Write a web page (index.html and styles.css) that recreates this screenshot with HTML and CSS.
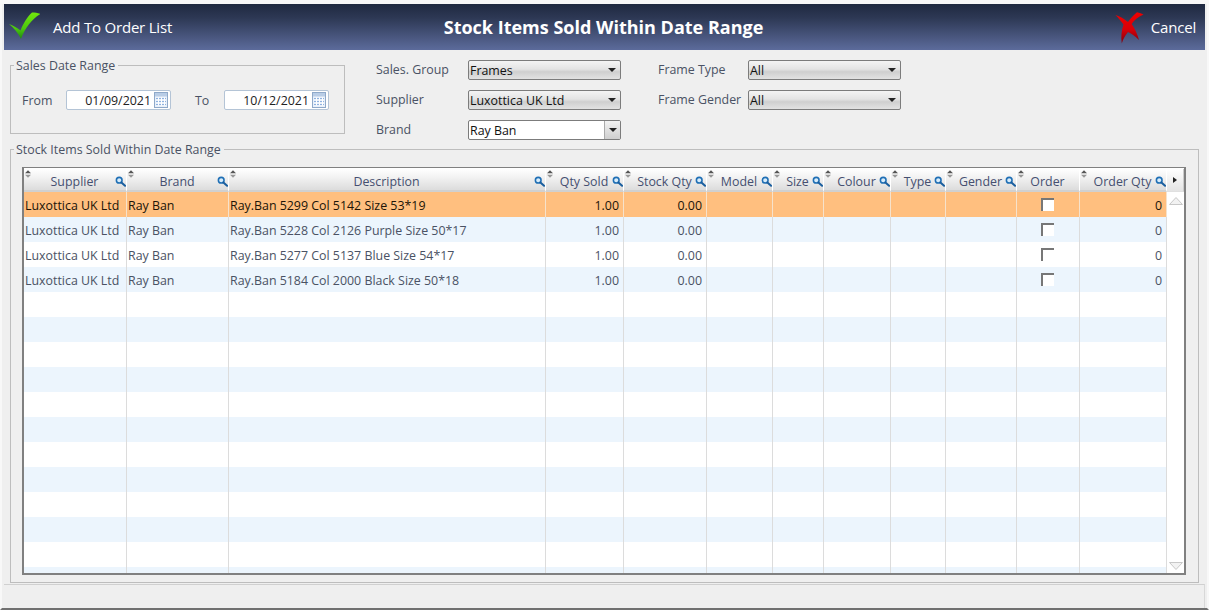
FILE: index.html
```html
<!DOCTYPE html>
<html lang="en">
<head>
<meta charset="utf-8">
<title>Stock Items Sold Within Date Range</title>
<link rel="stylesheet" href="styles.css">
</head>
<body>
<svg class="defs" width="0" height="0" aria-hidden="true">
  <defs>
    <symbol id="search" viewBox="0 0 12 12">
      <circle cx="4.6" cy="4.6" r="3.1" fill="#d8ecfa" stroke="#1f6fb5" stroke-width="1.7"/>
      <path d="M7 7l4 3.6" stroke="#1a5f9f" stroke-width="2.2" stroke-linecap="round"/>
    </symbol>
    <symbol id="sort" viewBox="0 0 7 9">
      <path d="M3.5 0L7 3.5H0z" fill="#555"/>
      <path d="M0 5.5h7L3.5 9z" fill="#999"/>
    </symbol>
    <symbol id="cal" viewBox="0 0 14 16">
      <rect x=".5" y=".5" width="13" height="15" fill="#eaf1fa" stroke="#8fa9c9"/>
      <rect x="1" y="1" width="12" height="3.5" fill="#b9cde6"/>
      <path d="M2 6h10v1H2zM2 9h10v1H2zM2 12h10v1H2z" fill="#8fb2e0"/>
      <path d="M4 5.5h1v8H4zM7 5.5h1v8H7zM10 5.5h1v8h-1z" fill="#fff"/>
    </symbol>
  </defs>
</svg>
<div class="window">
  <header class="titlebar">
    <div class="tb-side">
      <button class="tb-btn">
        <svg class="tb-check" width="36" height="32" viewBox="0 0 36 32"><defs><linearGradient id="g" x1="0" y1="0" x2="0" y2="1"><stop offset="0" stop-color="#72e60c"/><stop offset=".6" stop-color="#4cc80e"/><stop offset="1" stop-color="#1f8a10"/></linearGradient></defs><path d="M5 13C9 14.500 13 16.500 16.500 19.500C19 13 23 6 28 1.500C31 1.500 34 2 36.500 3C28 8 21 17 17 28C14 22 10 17 5 13Z" fill="url(#g)"/></svg>
        <span>Add To Order List</span>
      </button>
    </div>
    <h1 class="tb-title">Stock Items Sold Within Date Range</h1>
    <div class="tb-side tb-right">
      <button class="tb-btn tb-cancel">
        <svg width="30" height="34" viewBox="0 0 30 34"><defs><linearGradient id="r" x1="0" y1="0" x2="0" y2="1"><stop offset="0" stop-color="#f00000"/><stop offset=".55" stop-color="#d80008"/><stop offset="1" stop-color="#7a0010"/></linearGradient></defs><path d="M.5 4C5 5.500 9 7.500 13 11C16 7 19 3.500 22 1.300C24.500 2 27 2.800 28.500 3.500C23 6 19 9 16.700 13C20 18 22.500 23 24 29C20 25 16 22.500 13 21C10.500 24 8 28 6.800 32.500C5.700 26 6.500 19 8.500 13.500C6 10 3 6.500 .5 4Z" fill="url(#r)"/></svg>
        <span>Cancel</span>
      </button>
    </div>
  </header>

  <section class="filters">
    <fieldset class="group date-group">
      <legend>Sales Date Range</legend>
      <div class="date-row">
        <label class="date-label from">From</label>
        <div class="date-input"><span>01/09/2021</span><svg width="14" height="16"><use href="#cal"/></svg></div>
        <label class="date-label to">To</label>
        <div class="date-input"><span>10/12/2021</span><svg width="14" height="16"><use href="#cal"/></svg></div>
      </div>
    </fieldset>
    <div class="fields">
      <span class="f-label">Sales. Group</span><div class="combo"><span>Frames</span><i class="arrow"></i></div>
      <span class="f-label second">Frame Type</span><div class="combo"><span>All</span><i class="arrow"></i></div>
      <span class="f-label">Supplier</span><div class="combo"><span>Luxottica UK Ltd</span><i class="arrow"></i></div>
      <span class="f-label second">Frame Gender</span><div class="combo"><span>All</span><i class="arrow"></i></div>
      <span class="f-label">Brand</span><div class="combo edit"><span>Ray Ban</span><b class="drop"><i class="arrow"></i></b></div>
    </div>
  </section>

  <fieldset class="group stock-group">
    <legend>Stock Items Sold Within Date Range</legend>
    <div class="grid">
      <div class="grid-head">
        <div class="row cols head">
          <div class="hc"><svg class="sort"><use href="#sort"/></svg>Supplier<svg class="find"><use href="#search"/></svg></div>
          <div class="hc"><svg class="sort"><use href="#sort"/></svg>Brand<svg class="find"><use href="#search"/></svg></div>
          <div class="hc"><svg class="sort"><use href="#sort"/></svg>Description<svg class="find"><use href="#search"/></svg></div>
          <div class="hc"><svg class="sort"><use href="#sort"/></svg>Qty Sold<svg class="find"><use href="#search"/></svg></div>
          <div class="hc"><svg class="sort"><use href="#sort"/></svg>Stock Qty<svg class="find"><use href="#search"/></svg></div>
          <div class="hc"><svg class="sort"><use href="#sort"/></svg>Model<svg class="find"><use href="#search"/></svg></div>
          <div class="hc"><svg class="sort"><use href="#sort"/></svg>Size<svg class="find"><use href="#search"/></svg></div>
          <div class="hc"><svg class="sort"><use href="#sort"/></svg>Colour<svg class="find"><use href="#search"/></svg></div>
          <div class="hc"><svg class="sort"><use href="#sort"/></svg>Type<svg class="find"><use href="#search"/></svg></div>
          <div class="hc"><svg class="sort"><use href="#sort"/></svg>Gender<svg class="find"><use href="#search"/></svg></div>
          <div class="hc"><svg class="sort"><use href="#sort"/></svg>Order</div>
          <div class="hc"><svg class="sort"><use href="#sort"/></svg>Order Qty<svg class="find"><use href="#search"/></svg></div>
          <div class="hscroll"><i class="right-arrow"></i></div>
        </div>
      </div>
      <div class="grid-main">
        <div class="rows">
          <div class="row cols sel"><div class="c">Luxottica UK Ltd</div><div class="c">Ray Ban</div><div class="c">Ray.Ban 5299 Col 5142 Size 53*19</div><div class="c n">1.00</div><div class="c n">0.00</div><div class="c"></div><div class="c"></div><div class="c"></div><div class="c"></div><div class="c"></div><div class="c ck"><i class="checkbox"></i></div><div class="c n">0</div></div>
          <div class="row cols alt"><div class="c">Luxottica UK Ltd</div><div class="c">Ray Ban</div><div class="c">Ray.Ban 5228 Col 2126 Purple Size 50*17</div><div class="c n">1.00</div><div class="c n">0.00</div><div class="c"></div><div class="c"></div><div class="c"></div><div class="c"></div><div class="c"></div><div class="c ck"><i class="checkbox"></i></div><div class="c n">0</div></div>
          <div class="row cols"><div class="c">Luxottica UK Ltd</div><div class="c">Ray Ban</div><div class="c">Ray.Ban 5277 Col 5137 Blue Size 54*17</div><div class="c n">1.00</div><div class="c n">0.00</div><div class="c"></div><div class="c"></div><div class="c"></div><div class="c"></div><div class="c"></div><div class="c ck"><i class="checkbox"></i></div><div class="c n">0</div></div>
          <div class="row cols alt"><div class="c">Luxottica UK Ltd</div><div class="c">Ray Ban</div><div class="c">Ray.Ban 5184 Col 2000 Black Size 50*18</div><div class="c n">1.00</div><div class="c n">0.00</div><div class="c"></div><div class="c"></div><div class="c"></div><div class="c"></div><div class="c"></div><div class="c ck"><i class="checkbox"></i></div><div class="c n">0</div></div>
          <div class="row cols"><div class="c"></div><div class="c"></div><div class="c"></div><div class="c"></div><div class="c"></div><div class="c"></div><div class="c"></div><div class="c"></div><div class="c"></div><div class="c"></div><div class="c"></div><div class="c"></div></div>
          <div class="row cols alt"><div class="c"></div><div class="c"></div><div class="c"></div><div class="c"></div><div class="c"></div><div class="c"></div><div class="c"></div><div class="c"></div><div class="c"></div><div class="c"></div><div class="c"></div><div class="c"></div></div>
          <div class="row cols"><div class="c"></div><div class="c"></div><div class="c"></div><div class="c"></div><div class="c"></div><div class="c"></div><div class="c"></div><div class="c"></div><div class="c"></div><div class="c"></div><div class="c"></div><div class="c"></div></div>
          <div class="row cols alt"><div class="c"></div><div class="c"></div><div class="c"></div><div class="c"></div><div class="c"></div><div class="c"></div><div class="c"></div><div class="c"></div><div class="c"></div><div class="c"></div><div class="c"></div><div class="c"></div></div>
          <div class="row cols"><div class="c"></div><div class="c"></div><div class="c"></div><div class="c"></div><div class="c"></div><div class="c"></div><div class="c"></div><div class="c"></div><div class="c"></div><div class="c"></div><div class="c"></div><div class="c"></div></div>
          <div class="row cols alt"><div class="c"></div><div class="c"></div><div class="c"></div><div class="c"></div><div class="c"></div><div class="c"></div><div class="c"></div><div class="c"></div><div class="c"></div><div class="c"></div><div class="c"></div><div class="c"></div></div>
          <div class="row cols"><div class="c"></div><div class="c"></div><div class="c"></div><div class="c"></div><div class="c"></div><div class="c"></div><div class="c"></div><div class="c"></div><div class="c"></div><div class="c"></div><div class="c"></div><div class="c"></div></div>
          <div class="row cols alt"><div class="c"></div><div class="c"></div><div class="c"></div><div class="c"></div><div class="c"></div><div class="c"></div><div class="c"></div><div class="c"></div><div class="c"></div><div class="c"></div><div class="c"></div><div class="c"></div></div>
          <div class="row cols"><div class="c"></div><div class="c"></div><div class="c"></div><div class="c"></div><div class="c"></div><div class="c"></div><div class="c"></div><div class="c"></div><div class="c"></div><div class="c"></div><div class="c"></div><div class="c"></div></div>
          <div class="row cols alt"><div class="c"></div><div class="c"></div><div class="c"></div><div class="c"></div><div class="c"></div><div class="c"></div><div class="c"></div><div class="c"></div><div class="c"></div><div class="c"></div><div class="c"></div><div class="c"></div></div>
          <div class="row cols"><div class="c"></div><div class="c"></div><div class="c"></div><div class="c"></div><div class="c"></div><div class="c"></div><div class="c"></div><div class="c"></div><div class="c"></div><div class="c"></div><div class="c"></div><div class="c"></div></div>
          <div class="row cols alt"><div class="c"></div><div class="c"></div><div class="c"></div><div class="c"></div><div class="c"></div><div class="c"></div><div class="c"></div><div class="c"></div><div class="c"></div><div class="c"></div><div class="c"></div><div class="c"></div></div>
        </div>
        <div class="vscroll">
          <svg width="14" height="8" viewBox="0 0 14 8"><path d="M.5 7.500L7 .5L13.500 7.500Z" fill="#f2f2f2" stroke="#c8c8c8"/></svg>
          <svg width="14" height="8" viewBox="0 0 14 8"><path d="M.5 .5L7 7.500L13.500 .5Z" fill="#f2f2f2" stroke="#c8c8c8"/></svg>
        </div>
      </div>
    </div>
  </fieldset>

  <footer class="statusbar"></footer>
</div>
</body>
</html>
```
FILE: styles.css
```css
* { box-sizing: border-box; }
html, body { margin: 0; height: 100%; overflow: hidden; }
body { font-family: "Open Sans", "Noto Sans", sans-serif; font-size: 12.4px; color: #4a5264; background: #efefef; }
.defs { position: absolute; }

.window {
  width: 1209px; height: 610px;
  display: flex; flex-direction: column;
  background: #efefef;
  border: solid #f8f8f8;
  border-width: 4px 2px 2px 2px;
  border-bottom-color: #707070;
}

.titlebar {
  flex: none; height: 46px; margin: 0 2px;
  display: flex; align-items: center;
  background: linear-gradient(#1f2940 0%, #2d3854 30%, #5c6b9b 100%);
  color: #fff;
}
.tb-side { flex: 1 1 0; display: flex; }
.tb-right { justify-content: flex-end; }
.tb-btn {
  display: flex; align-items: center;
  background: none; border: 0; padding: 0;
  font: inherit; font-size: 15px; color: #fff;
}
.tb-btn span { letter-spacing: -.2px; }
.tb-check { margin: 0 13px 0 0; }
.tb-cancel { gap: 6px; padding-right: 9px; }
.tb-cancel svg { margin-top: 2px; }
.tb-title { margin: 0 2px 0 0; font-size: 18px; font-weight: 700; }

.group { margin: 0; padding: 0; border: 1px solid #bdbdbd; min-width: 0; }
.group legend { padding: 2px 3px 0 2px; margin-left: 3px; font-size: 12.4px; line-height: 16px; color: #4a5264; }

.filters { flex: none; height: 90px; display: flex; padding: 6px 0 0 8px; }
.date-group { width: 335px; height: 78px; }
.date-row { display: flex; align-items: center; padding-top: 16px; }
.date-label { color: #4a5264; }
.date-label.from { width: 44px; margin-left: 11px; }
.date-label.to { width: 29px; margin-left: 24px; }
.date-input {
  width: 105px; height: 20px; display: flex; align-items: center; justify-content: flex-end;
  padding-right: 2px; gap: 3px;
  background: #fff; color: #222;
  border: 1px solid #b4c4d6; border-radius: 2px;
}

.fields {
  margin: 4px 0 0 31px;
  display: grid; grid-template-columns: 92px 153px 127px 153px;
  grid-auto-rows: 20px; row-gap: 10px; align-items: center;
  height: 80px;
}
.f-label { white-space: nowrap; position: relative; top: -1px; }
.f-label.second { padding-left: 37px; }
.combo {
  height: 20px; display: flex; align-items: center; justify-content: space-between;
  padding: 0 4px 0 1px;
  border: 1px solid #7c7c7c; border-radius: 2px;
  background: linear-gradient(#f4f4f4 0%, #e4e4e4 45%, #cfcfcf 60%, #e2e2e2 100%);
  color: #111;
}
.combo.edit { background: #fff; padding-right: 0; }
.drop { width: 16px; height: 18px; display: flex; align-items: center; justify-content: center; background: linear-gradient(#f2f2f2, #cfcfcf); border-left: 1px solid #aaa; }
.arrow { width: 0; height: 0; border: solid transparent; border-width: 4px 4px 0; border-top-color: #222; }

.stock-group { flex: none; height: 443px; margin: 0 8px; }
.grid { width: 1164px; height: 408px; margin: 9px 0 0 11px; display: flex; flex-direction: column; border: 2px solid #808080; border-top-width: 1px; background: #fff; }
.grid-head { flex: none; }
.grid-main { flex: 1; display: flex; min-height: 0; overflow: hidden; }
.rows { flex: none; overflow: hidden; }
.row { height: 25px; }
.cols { display: grid; grid-template-columns: 103px 102px 317px 78px 83px 66px 51px 67px 55px 71px 63px 87px 17px; }
.head { height: 24px; border-top: 1px solid #fff; }
.rows .cols { grid-template-columns: 103px 102px 317px 78px 83px 66px 51px 67px 55px 71px 63px 87px; }
.hc {
  position: relative; height: 100%;
  display: flex; align-items: center; justify-content: center;
  padding: 4px 1px 0 0;
  background: linear-gradient(#fff, #f2f2f2 40%, #dcdcdc);
  border-right: 1px solid #fff;
  border-bottom: 2px solid #d0d0d0;
  color: #454f70; white-space: nowrap;
}
.sort { position: absolute; left: 1px; top: 1px; width: 6px; height: 8px; }
.find { position: absolute; right: 0; top: 7px; width: 11px; height: 11px; }
.hscroll { display: flex; align-items: center; justify-content: center; background: linear-gradient(#fff, #e4e4e4); border-bottom: 1px solid #e0e0e0; border-right: 1px solid #ccc; }
.right-arrow { width: 0; height: 0; border: solid transparent; border-width: 3px 0 3px 4px; border-left-color: #222; }
.c {
  height: 25px; line-height: 27px; padding: 0 3px 0 1px;
  border-right: 1px solid #dcdcdc;
  white-space: nowrap; overflow: hidden;
}
.c.n { text-align: right; padding-right: 4px; }
.c.ck { display: flex; justify-content: center; padding: 6px 2px 0 0; }
.alt { background: #ecf5fd; }
.sel { background: #ffbf7f; color: #201408; }
.sel .c { border-right-color: #f6e2cc; }
.checkbox { width: 13px; height: 13px; background: #fff; border: solid #777; border-width: 2px 0 0 2px; }
.vscroll { flex: 1; display: flex; flex-direction: column; justify-content: space-between; align-items: center; padding: 5px 0 3px; background: #fff; }

.statusbar { flex: none; height: 24px; margin: 1px 2px 0; border-top: 1px solid #d0d0d0; border-right: 1px solid #d8d8d8; }
```
